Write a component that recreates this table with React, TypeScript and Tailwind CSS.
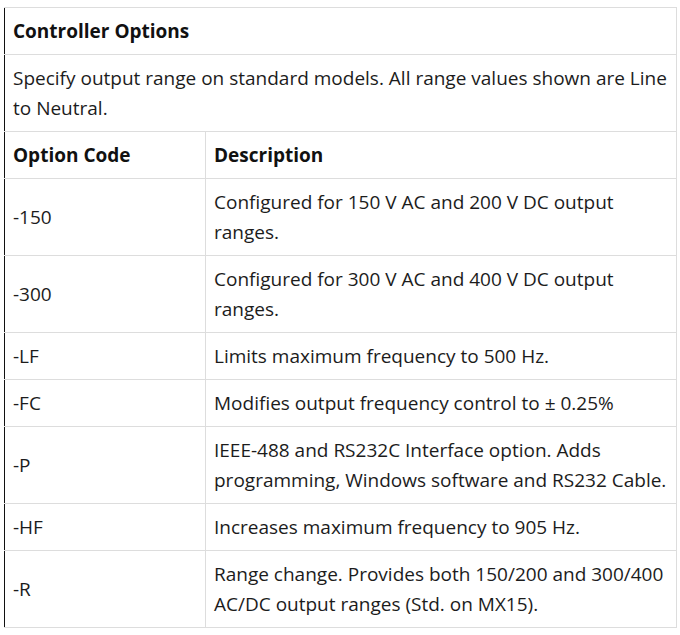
const rows: { code: string; desc: string }[] = [
  { code: "-150", desc: "Configured for 150 V AC and 200 V DC output ranges." },
  { code: "-300", desc: "Configured for 300 V AC and 400 V DC output ranges." },
  { code: "-LF", desc: "Limits maximum frequency to 500 Hz." },
  { code: "-FC", desc: "Modifies output frequency control to ± 0.25%" },
  {
    code: "-P",
    desc: "IEEE-488 and RS232C Interface option. Adds programming, Windows software and RS232 Cable.",
  },
  { code: "-HF", desc: "Increases maximum frequency to 905 Hz." },
  {
    code: "-R",
    desc: "Range change. Provides both 150/200 and 300/400 AC/DC output ranges (Std. on MX15).",
  },
];

const cell = "border border-[#dddddd] px-2 py-2 align-middle";
const first = "border-l-[#111111]";

export default function App() {
  return (
    <div className="min-h-[635px] bg-white pt-[7px] pl-[4px] font-['Open_Sans',sans-serif] text-[19px] leading-[30px] text-[#1c1c1c]">
      <table className="w-[673px] border-collapse text-left">
        <tbody>
          <tr>
            <th colSpan={2} className={`${cell} ${first} h-[47px] font-bold text-[#111111]`}>
              Controller Options
            </th>
          </tr>
          <tr>
            <td colSpan={2} className={`${cell} ${first}`}>
              Specify output range on standard models. All range values shown
              are Line to Neutral.
            </td>
          </tr>
          <tr>
            <th className={`${cell} ${first} h-[47px] w-[201px] font-bold text-[#111111]`}>
              Option Code
            </th>
            <th className={`${cell} font-bold text-[#111111]`}>Description</th>
          </tr>
          {rows.map((r) => (
            <tr key={r.code}>
              <td className={`${cell} ${first}`}>{r.code}</td>
              <td className={cell}>{r.desc}</td>
            </tr>
          ))}
        </tbody>
      </table>
    </div>
  );
}
